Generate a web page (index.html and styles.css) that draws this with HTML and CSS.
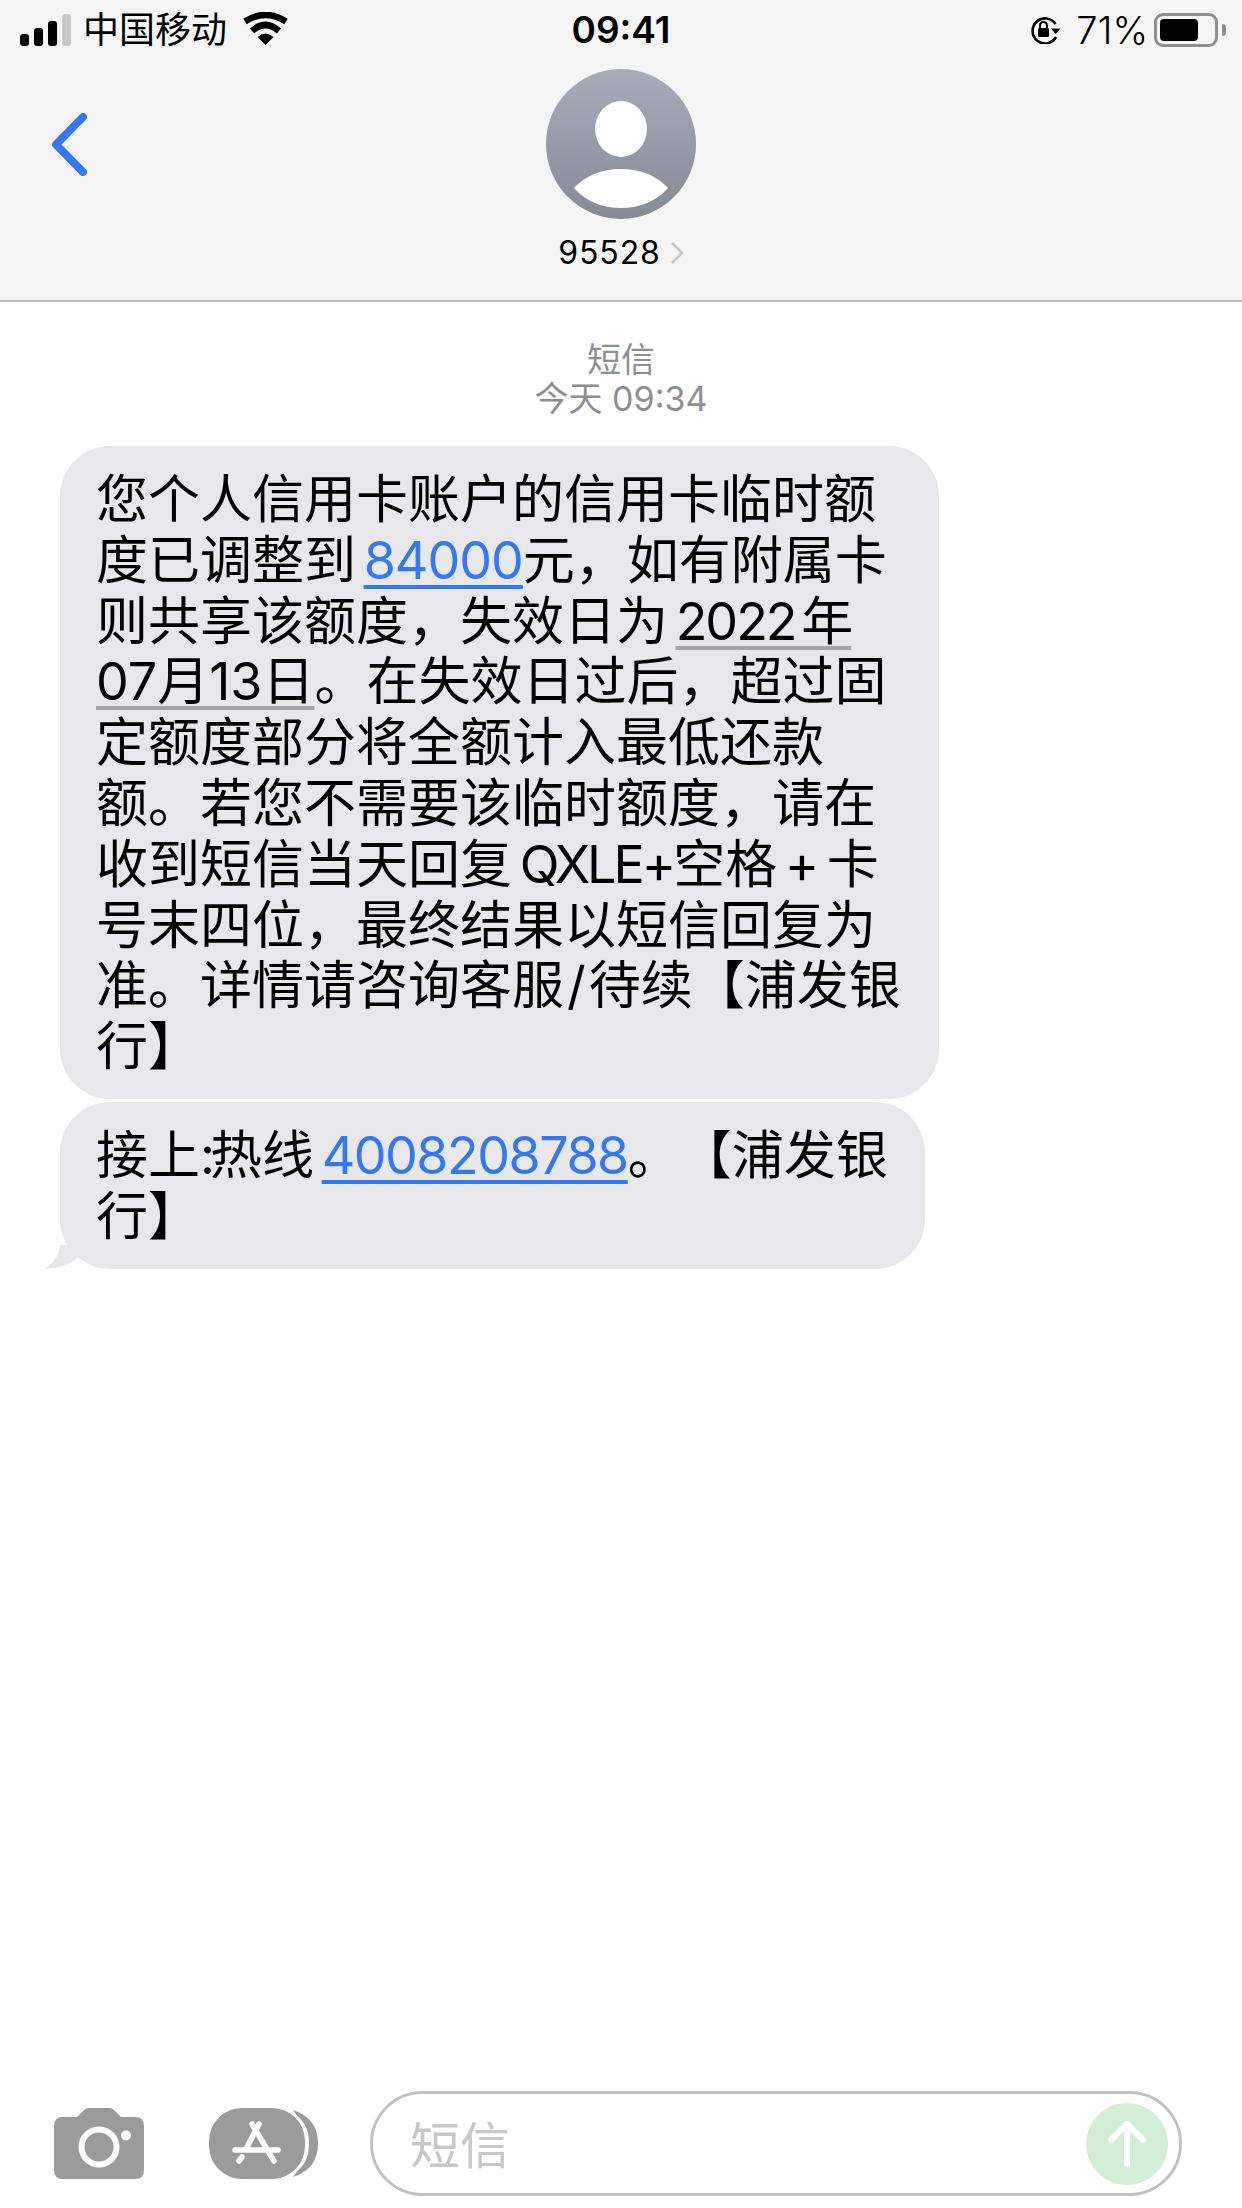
FILE: index.html
```html
<!DOCTYPE html>
<html lang="zh-CN">
<head>
  <meta charset="UTF-8">
  <title>短信</title>
  <link rel="stylesheet" href="styles.css">
</head>
<body>
  <div class="page">

    <header class="header">
      <div class="status">
        <div class="status-left">
          <div class="signal">
            <i class="bar bar1"></i>
            <i class="bar bar2"></i>
            <i class="bar bar3"></i>
            <i class="bar bar4"></i>
          </div>
          <span class="carrier">中国移动</span>
          <svg class="wifi" width="47" height="33" viewBox="0 0 47 33">
            <path d="M3 9.5Q23.5-3.5 44 9.5" fill="none" stroke="#000" stroke-width="6.5"/>
            <path d="M10 19Q23.5 7 37 19" fill="none" stroke="#000" stroke-width="6.5"/>
            <path d="M23.5 33L15.5 25Q23.5 18 31.5 25Z" fill="#000"/>
          </svg>
        </div>
        <div class="clock">09:41</div>
        <div class="status-right">
          <svg class="rotation" width="32" height="28" viewBox="0 0 32 28">
            <path d="M27 21A12.5 12.5 0 1 1 26.500 8" fill="none" stroke="#000" stroke-width="2.600"/>
            <path d="M22 12.500H31.500L26.700 18Z" fill="#000"/>
            <rect x="9" y="12" width="11" height="9" rx="1.500" fill="#000"/>
            <path d="M11 12V9.500A3.500 3.500 0 0 1 18 9.500V12" fill="none" stroke="#000" stroke-width="2"/>
          </svg>
          <span class="percent">71%</span>
          <div class="battery">
            <div class="battery-fill"></div>
          </div>
          <i class="battery-nub"></i>
        </div>
      </div>

      <div class="nav">
        <svg class="back" width="36" height="63" viewBox="0 0 36 63">
          <path d="M32 4L5 31.500L32 59" fill="none" stroke="#3478f6" stroke-width="8" stroke-linecap="round" stroke-linejoin="round"/>
        </svg>
        <div class="contact">
          <svg class="avatar" width="150" height="150" viewBox="0 0 150 150">
            <defs>
              <linearGradient id="avatarFill" x1="0" y1="0" x2="0" y2="1">
                <stop offset="0" stop-color="#a9adb9"/>
                <stop offset="1" stop-color="#858a95"/>
              </linearGradient>
            </defs>
            <circle cx="75" cy="75" r="75" fill="url(#avatarFill)"/>
            <ellipse cx="75" cy="60" rx="26" ry="28" fill="#fff"/>
            <path d="M28 119Q46 100 75 100Q104 100 122 119Q104 139 75 139Q46 139 28 119Z" fill="#fff"/>
          </svg>
          <div class="name-row">
            <span class="name">95528</span>
            <svg class="name-arrow" width="14" height="22" viewBox="0 0 14 22">
              <path d="M2 1L12 11L2 21" fill="none" stroke="#c6c6c6" stroke-width="2.500"/>
            </svg>
          </div>
        </div>
      </div>
    </header>

    <main class="thread">
      <div class="stamp">
        <div>短信</div>
        <div>今天 09:34</div>
      </div>

      <div class="bubble bubble-first">
        您个人信用卡账户的信用卡临时额<br>
        度已调整到 <a class="link">84000</a>元，如有附属卡<br>
        则共享该额度，失效日为 <span class="date date-year">2022 年</span><br>
        <span class="date">07月13日</span>。在失效日过后，超过固<br>
        定额度部分将全额计入最低还款<br>
        额。若您不需要该临时额度，请在<br>
        收到短信当天回复 <span class="latin">QXLE+</span>空格 + 卡<br>
        号末四位，最终结果以短信回复为<br>
        准。详情请咨询客服<span class="slash">/</span>待续【浦发银<br>
        行】
      </div>

      <div class="bubble bubble-last">
        接上<span class="colon">:</span>热线 <a class="link link-phone">4008208788</a>。【浦发银<br>
        行】
        <svg class="tail" width="34" height="24" viewBox="0 0 34 24">
          <path d="M16 0C16 10 8 20 0 23.500C12 24.500 26 20 34 12L34 0Z" fill="#e8e8ea"/>
        </svg>
      </div>
    </main>

    <footer class="composer">
      <svg class="camera" width="90" height="71" viewBox="0 0 90 71">
        <path d="M9 9H23L30 2Q32 0 35 0H55Q58 0 60 2L67 9H81Q90 9 90 18V62Q90 71 81 71H9Q0 71 0 62V18Q0 9 9 9Z" fill="#9b9b9b"/>
        <circle cx="45" cy="39" r="17.500" fill="none" stroke="#fff" stroke-width="6"/>
        <circle cx="72" cy="27.500" r="5" fill="#fff"/>
      </svg>

      <svg class="apps" width="109" height="71" viewBox="0 0 109 71">
        <path d="M84 2Q109 10 109 35.500Q109 61 84 69Q96 55 96 35.500Q96 16 84 2Z" fill="#9b9b9b"/>
        <rect x="0" y="0" width="100" height="71" rx="33" fill="#fff"/>
        <rect x="0" y="0" width="96" height="71" rx="33" fill="#9b9b9b"/>
        <g fill="none" stroke="#fff" stroke-width="5.500" stroke-linecap="round">
          <path d="M50 16L37 41"/>
          <path d="M33 49L30 53"/>
          <path d="M43 16L65 53"/>
          <path d="M26 42H69"/>
        </g>
      </svg>

      <div class="input">
        <span class="placeholder">短信</span>
        <div class="send">
          <svg width="40" height="46" viewBox="0 0 40 46">
            <path d="M20 43V3M4 19L20 3L36 19" fill="none" stroke="#fff" stroke-width="6" stroke-linecap="round" stroke-linejoin="round"/>
          </svg>
        </div>
      </div>
    </footer>

  </div>
</body>
</html>
```

FILE: styles.css
```css
* {
  box-sizing: border-box;
}

body {
  margin: 0;
  background: #fff;
  font-family: Inter, "Noto Sans CJK SC", sans-serif;
  color: #000;
}

.page {
  width: 1242px;
  height: 2208px;
  display: flex;
  flex-direction: column;
  overflow: hidden;
}

.header {
  height: 302px;
  background: #f5f5f5;
  border-bottom: 2px solid #b9b9b9;
}

.status {
  height: 60px;
  display: grid;
  grid-template-columns: 1fr auto 1fr;
  align-items: center;
}

.status-left {
  display: flex;
  align-items: center;
  padding-left: 20px;
}

.signal {
  display: flex;
  align-items: flex-end;
  gap: 5px;
  height: 32px;
}

.bar {
  width: 9px;
  border-radius: 3px;
  background: #000;
}

.bar1 {
  height: 12px;
}

.bar2 {
  height: 18px;
}

.bar3 {
  height: 25px;
}

.bar4 {
  height: 32px;
  background: #c8c8c8;
}

.carrier {
  margin-left: 12px;
  font-size: 36px;
  line-height: 40px;
}

.wifi {
  margin-left: 15px;
  margin-top: -4px;
}

.clock {
  font-size: 37px;
  font-weight: 600;
  line-height: 40px;
}

.status-right {
  display: flex;
  align-items: center;
  justify-content: flex-end;
  padding-right: 16px;
}

.percent {
  margin-left: 15px;
  font-size: 38px;
  font-weight: 300;
  line-height: 40px;
}

.battery {
  width: 64px;
  height: 34px;
  margin-left: 6px;
  padding: 3px;
  border: 3px solid #8f8f8f;
  border-radius: 9px;
}

.battery-fill {
  width: 38px;
  height: 22px;
  border-radius: 4px;
  background: #000;
}

.battery-nub {
  width: 4px;
  height: 12px;
  margin-left: 4px;
  border-radius: 0 6px 6px 0;
  background: #8f8f8f;
}

.nav {
  display: grid;
  grid-template-columns: 1fr auto 1fr;
  padding-top: 9px;
}

.back {
  margin: 44px 0 0 51px;
}

.contact {
  display: flex;
  flex-direction: column;
  align-items: center;
}

.avatar {
  display: block;
}

.name-row {
  display: flex;
  align-items: center;
  gap: 9px;
  margin-top: 14px;
}

.name {
  font-size: 32px;
  line-height: 40px;
  letter-spacing: 0.9px;
}

.thread {
  flex: 1;
  padding: 38px 0 0 60px;
}

.stamp {
  margin: 0 0 28px -60px;
  font-size: 34px;
  line-height: 39px;
  color: #8e8e93;
  text-align: center;
}

.bubble {
  position: relative;
  padding: 24px 36px 21px;
  border-radius: 50px;
  background: #e8e8ea;
  font-size: 52px;
  line-height: 60.8px;
  white-space: nowrap;
  word-spacing: -7px;
  text-spacing-trim: space-all;
}

.bubble-first {
  width: 879px;
  margin-bottom: 3px;
}

.bubble-last {
  width: 865px;
}

.link {
  color: #3478f6;
  letter-spacing: -1px;
  text-decoration-line: underline;
  text-decoration-thickness: 4px;
  text-underline-offset: 6px;
  text-decoration-skip-ink: none;
}

.link-phone {
  letter-spacing: -1.5px;
}

.date {
  text-decoration-line: underline;
  text-decoration-color: #a4a4a6;
  text-decoration-thickness: 4px;
  text-underline-offset: 6px;
  text-decoration-skip-ink: none;
}

.date-year {
  letter-spacing: -2px;
}

.latin {
  letter-spacing: -3px;
}

.slash {
  margin: 0 3px;
}

.colon {
  letter-spacing: -5px;
}

.tail {
  position: absolute;
  left: -16px;
  bottom: 0;
}

.composer {
  display: flex;
  align-items: center;
  padding: 0 60px 12px 54px;
}

.camera {
  flex: none;
}

.apps {
  flex: none;
  margin-left: 65px;
}

.input {
  flex: 1;
  height: 105px;
  margin-left: 52px;
  padding: 0 11px 0 37px;
  display: flex;
  align-items: center;
  justify-content: space-between;
  border: 3px solid #c2c2c2;
  border-radius: 53px;
}

.placeholder {
  padding-bottom: 3px;
  font-size: 50px;
  color: #c8c8c8;
}

.send {
  width: 82px;
  height: 82px;
  display: flex;
  align-items: center;
  justify-content: center;
  border-radius: 50%;
  background: #d3eed6;
}
```
